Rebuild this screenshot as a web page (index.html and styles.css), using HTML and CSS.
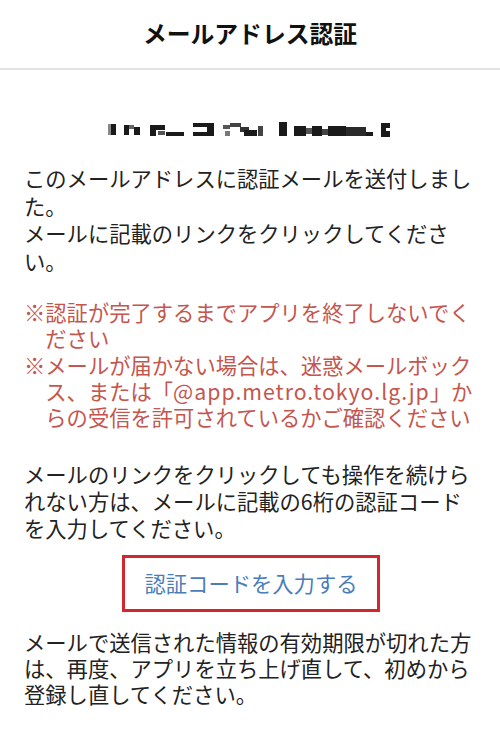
FILE: index.html
```html
<!DOCTYPE html>
<html lang="ja">
<head>
<meta charset="utf-8">
<link rel="stylesheet" href="styles.css">
</head>
<body>
<header class="header"><h1 class="title">メールアドレス認証</h1></header>
<main class="content">
  <div class="email">
    <svg width="282" height="16" viewBox="0 0 282 16" aria-label="masked email">
      <g fill="#1a1a1a">
        <rect x="0" y="2" width="3" height="11" fill="#888"/>
        <rect x="3" y="2" width="5" height="11"/>
        <rect x="16" y="3" width="5" height="10"/>
        <rect x="21" y="3" width="5" height="4" fill="#666"/>
        <rect x="26" y="5" width="6" height="8"/>
        <rect x="42" y="3" width="6" height="11"/>
        <rect x="48" y="3" width="9" height="5"/>
        <rect x="50" y="9" width="7" height="4" fill="#555"/>
        <rect x="58" y="10" width="18" height="4"/>
        <rect x="85" y="1" width="14" height="4"/>
        <rect x="85" y="10" width="14" height="4"/>
        <rect x="99" y="1" width="7" height="13"/>
        <rect x="115" y="3" width="7" height="4" fill="#555"/>
        <rect x="117" y="9" width="5" height="5" fill="#777"/>
        <rect x="122" y="1" width="11" height="4" fill="#444"/>
        <rect x="132" y="5" width="9" height="5" fill="#333"/>
        <rect x="136" y="8" width="13" height="6"/>
        <rect x="150" y="4" width="5" height="10" fill="#444"/>
        <rect x="171" y="0" width="8" height="14"/>
        <rect x="186" y="4" width="12" height="10"/>
        <rect x="198" y="6" width="6" height="6" fill="#555"/>
        <rect x="204" y="4" width="10" height="10"/>
        <rect x="214" y="7" width="6" height="6" fill="#444"/>
        <rect x="220" y="4" width="18" height="10"/>
        <rect x="238" y="5" width="20" height="9" fill="#2a2a2a"/>
        <rect x="258" y="10" width="7" height="4"/>
        <rect x="273" y="1" width="9" height="14"/>
        <rect x="278" y="6" width="4" height="3" fill="#fff"/>
      </g>
    </svg>
  </div>
  <p class="para para-first">このメールアドレスに認証メールを送付しました。<br>メールに記載のリンクをクリックしてください。</p>
  <div class="notes">
    <p class="note">※認証が完了するまでアプリを終了しないでください</p>
    <p class="note">※メールが届かない場合は、迷惑メールボックス、または「<span class="latin">@app.metro.tokyo.lg.jp</span>」からの受信を許可されているかご確認ください</p>
  </div>
  <p class="para para-code">メールのリンクをクリックしても操作を続けられない方は、メールに記載の6桁の認証コードを入力してください。</p>
  <div class="btn-row"><a class="code-btn">認証コードを入力する</a></div>
  <p class="para para-last">メールで送信された情報の有効期限が切れた方は、再度、アプリを立ち上げ直して、初めから登録し直してください。</p>
</main>
</body>
</html>
```
FILE: styles.css
```css
* { box-sizing: border-box; }
html, body { margin: 0; padding: 0; background: #fff; }
body {
  width: 500px;
  font-family: "Noto Sans CJK JP", "Noto Sans", sans-serif;
  color: #222;
}
.header {
  height: 70px;
  border-bottom: 2px solid #e2e2e2;
  display: flex;
  align-items: center;
  justify-content: center;
}
.title {
  margin: 0;
  font-size: 23.8px;
  font-weight: 700;
  color: #111;
  line-height: 1;
  padding-bottom: 2px;
}
.content {
  padding: 0 24px;
}
.email {
  display: flex;
  justify-content: center;
  margin-top: 52px;
  height: 16px;
  padding-right: 2px;
}
.email svg { display: block; }
.latin {
  letter-spacing: 1px;
}
.para {
  margin: 0;
  font-size: 21.3px;
  line-height: 27.5px;
  color: #222;
}
.para-first { margin-top: 26px; }
.notes { margin-top: 25px; }
.note {
  margin: 0;
  font-size: 21.3px;
  line-height: 26.3px;
  color: #c4564e;
  padding-left: 1em;
  text-indent: -1em;
}
.para-code { margin-top: 30px; line-height: 27px; }
.btn-row {
  display: flex;
  justify-content: center;
  margin-top: 14px;
}
.code-btn {
  display: flex;
  align-items: center;
  justify-content: center;
  width: 258px;
  height: 57px;
  border: 3px solid #d4262e;
  color: #4b7db9;
  font-size: 21.3px;
  padding-bottom: 2px;
  margin-left: 2px;
}
.para-last { margin-top: 17px; line-height: 25.8px; }
```
